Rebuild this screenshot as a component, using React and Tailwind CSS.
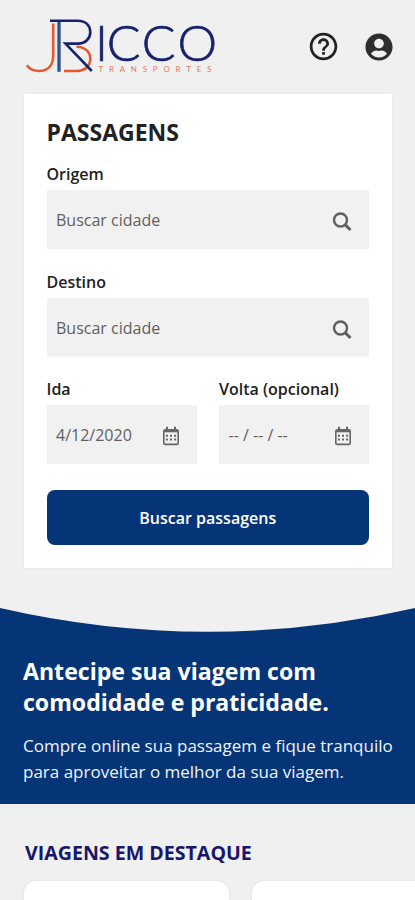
import React from "react";
import { FaUserCircle } from "react-icons/fa";
import { MdHelpOutline } from "react-icons/md";

function Logo() {
  return (
    <svg
      width="196"
      height="60"
      viewBox="24 16 196 60"
      fill="none"
      role="img"
      className="overflow-visible"
    >
      <g strokeWidth="2.6">
        <path d="M26.8 65.3C30 69.5 35 71.2 40 71C48.5 70.6 53.2 64.5 53.2 55.5V23.5" stroke="#e35a2c" />
        <path d="M76.5 46.8C85 47 90.3 52 90.3 58.5C90.3 66 85 71 77 71H64" stroke="#e35a2c" />
        <path d="M59 21V71.8" stroke="#2f5590" strokeWidth="3.4" />
        <path
          d="M50 20.7H78C85.5 20.7 90.3 25.5 90.3 32C90.3 38.5 85.5 43.6 78 43.6H65.5L91.8 71"
          stroke="#17226f"
        />
      </g>
      <text
        x="94.9 106.8 141.8 177.5"
        y="61.3"
        fontSize="50"
        fill="#17226f"
        stroke="#17226f"
        strokeWidth="0.7"
        className="font-['Lato'] font-light"
      >
        ICCO
      </text>
      <text
        x="98.4"
        y="72.4"
        fontSize="8"
        fill="#e8795a"
        textLength="113"
        className="font-['Lato']"
      >
        TRANSPORTES
      </text>
    </svg>
  );
}

function SearchIcon() {
  return (
    <svg width="20" height="20" viewBox="0 0 20 20" fill="none" stroke="#5f5f5f" className="mt-1">
      <circle cx="8.5" cy="8" r="6.5" strokeWidth="2.4" />
      <path d="M13.1 12.6L18.5 18" strokeWidth="2.9" />
    </svg>
  );
}

function CalendarIcon() {
  return (
    <svg width="18" height="20" viewBox="0 0 18 20" fill="none" stroke="#666666" className="mt-0.5">
      <rect x="1.8" y="3.8" width="14.4" height="14.6" rx="1.5" strokeWidth="1.6" />
      <path d="M2 5H16" strokeWidth="2.6" />
      <path d="M5 0.8V4M13 0.8V4" strokeWidth="2" />
      <path d="M3.9 9.8H14.1M3.9 13.5H14.1" strokeWidth="2" strokeDasharray="2 2.1" />
    </svg>
  );
}

function Field({ label, value, icon }) {
  return (
    <div className="flex-1">
      <div className="h-6 text-[16px] leading-6 font-semibold text-[#222222]">
        {label}
      </div>
      <div className="mt-1 flex h-[59px] items-center justify-between bg-[#f1f1f1] pr-[17px] pl-[9.5px] text-[16px] text-[#5f5f5f]">
        <span>{value}</span>
        {icon}
      </div>
    </div>
  );
}

export default function App() {
  return (
    <div className="h-[900px] w-full overflow-hidden bg-[#f0f0f0] font-['Open_Sans',sans-serif]">
      <header className="flex h-[94px] items-start justify-between pt-4 pr-[22.5px] pl-6">
        <Logo />
        <div className="flex items-center gap-[25px] pt-[14px]">
          <MdHelpOutline size={33} className="text-[#222222]" />
          <FaUserCircle size={28} className="text-[#2e2e2e]" />
        </div>
      </header>

      <section className="mr-[23px] ml-[23.5px] h-[474px] bg-white pt-[22px] pr-[23px] pl-[23px] shadow-[0_0_2px_1px_#e9e9e9]">
        <h1 className="text-[23px] leading-8 font-bold text-[#222222]">PASSAGENS</h1>
        <div className="mt-[14px] flex">
          <Field label="Origem" value="Buscar cidade" icon={<SearchIcon />} />
        </div>
        <div className="mt-[21px] flex">
          <Field label="Destino" value="Buscar cidade" icon={<SearchIcon />} />
        </div>
        <div className="mt-5 flex gap-[22.5px]">
          <Field label="Ida" value="4/12/2020" icon={<CalendarIcon />} />
          <Field label="Volta (opcional)" value="-- / -- / --" icon={<CalendarIcon />} />
        </div>
        <button className="mt-[26px] h-[55px] w-full rounded-lg bg-[#063577] text-[16px] font-semibold text-white">
          Buscar passagens
        </button>
      </section>

      <section className="mt-[39px] h-[197px] bg-[#063577] text-white">
        <svg className="block w-full" height="26" viewBox="0 0 415 26" preserveAspectRatio="none">
          <path d="M0 0V1Q207.5 48.5 415 1V0Z" fill="#f0f0f0" />
        </svg>
        <div className="pt-[23px] pl-[23px]">
          <h2 className="text-[23.1px] leading-[31px] font-bold whitespace-nowrap">
            Antecipe sua viagem com
            <br />
            comodidade e praticidade.
          </h2>
          <p className="mt-[15px] text-[17px] leading-[26px] whitespace-nowrap text-[#f0f3fa]">
            Compre online sua passagem e fique tranquilo
            <br />
            para aproveitar o melhor da sua viagem.
          </p>
        </div>
      </section>

      <section className="pt-[34px] pl-6">
        <h3 className="pl-px text-[19.6px] leading-[30px] font-bold text-[#17176b]">
          VIAGENS EM DESTAQUE
        </h3>
        <div className="mt-[13px] flex gap-[23px]">
          <div className="h-40 w-[205px] shrink-0 rounded-xl bg-white shadow-[0_0_3px_#d9d9d9]" />
          <div className="h-40 w-[205px] shrink-0 rounded-xl bg-white shadow-[0_0_3px_#d9d9d9]" />
        </div>
      </section>
    </div>
  );
}
